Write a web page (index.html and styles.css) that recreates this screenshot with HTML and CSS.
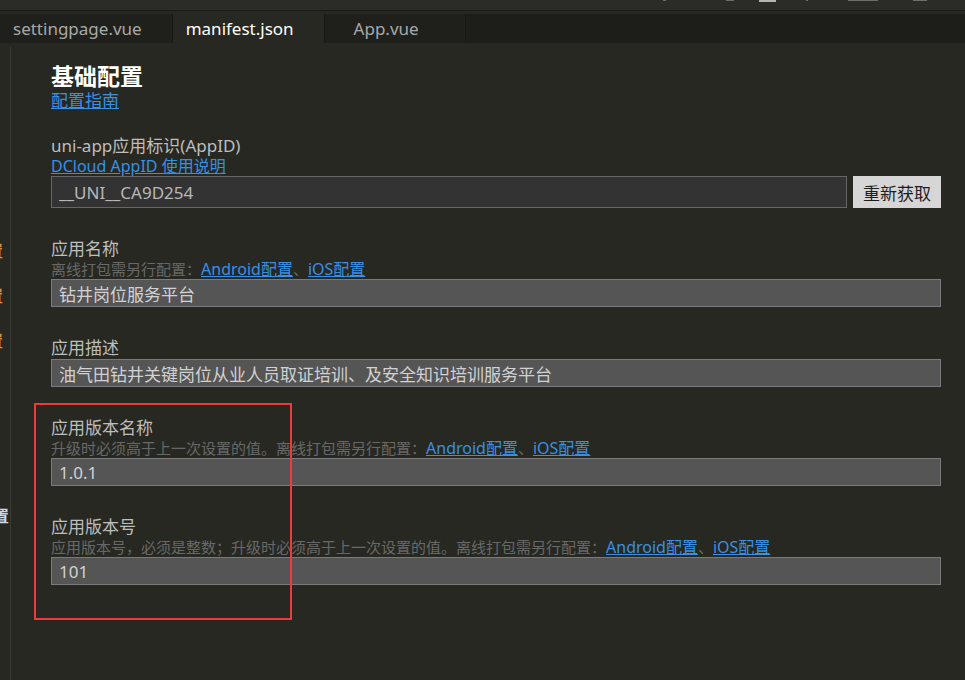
FILE: index.html
```html
<!DOCTYPE html>
<html lang="zh-CN">
<head>
    <meta charset="UTF-8">
    <meta name="viewport" content="width=device-width, initial-scale=1.0">
    <title>manifest.json</title>
    <link rel="stylesheet" href="styles.css">
</head>
<body>
    <div class="toolbar">
        <span class="tool-mark" style="width: 3px; margin-left: 663px;"></span>
        <span class="tool-mark" style="width: 8px; margin-left: 60px;"></span>
        <span class="tool-mark light" style="width: 17px; margin-left: 25px;"></span>
        <span class="tool-mark" style="width: 2px; margin-left: 30px;"></span>
        <span class="tool-mark" style="width: 30px; margin-left: 40px;"></span>
        <span class="tool-mark" style="width: 14px; margin-left: 35px;"></span>
    </div>

    <ul class="tabs">
        <li class="tab">settingpage.vue</li>
        <li class="tab active">manifest.json</li>
        <li class="tab">App.vue</li>
    </ul>

    <div class="main">
        <div class="side">
            <div class="side-item orange top1"><span>置</span></div>
            <div class="side-item orange"><span>置</span></div>
            <div class="side-item orange"><span>置</span></div>
            <div class="side-item white"><span>置</span></div>
        </div>

        <div class="content">
            <h1 class="titulo">基础配置</h1>
            <a class="guia grande" href="#">配置指南</a>

            <div class="campo primeiro">
                <div class="rotulo">uni-app应用标识(AppID)</div>
                <a class="guia" href="#">DCloud AppID 使用说明</a>
                <div class="linha">
                    <input class="valor escuro" type="text" value="__UNI__CA9D254" readonly>
                    <button class="botao">重新获取</button>
                </div>
            </div>

            <div class="campo">
                <div class="rotulo">应用名称</div>
                <div class="dica">离线打包需另行配置：<a href="#">Android配置</a>、<a href="#">iOS配置</a></div>
                <input class="valor" type="text" value="钻井岗位服务平台">
            </div>

            <div class="campo">
                <div class="rotulo">应用描述</div>
                <input class="valor" type="text" value="油气田钻井关键岗位从业人员取证培训、及安全知识培训服务平台">
            </div>

            <div class="campo">
                <div class="rotulo">应用版本名称</div>
                <div class="dica">升级时必须高于上一次设置的值。离线打包需另行配置：<a href="#">Android配置</a>、<a href="#">iOS配置</a></div>
                <input class="valor" type="text" value="1.0.1">
            </div>

            <div class="campo">
                <div class="rotulo">应用版本号</div>
                <div class="dica">应用版本号，必须是整数；升级时必须高于上一次设置的值。离线打包需另行配置：<a href="#">Android配置</a>、<a href="#">iOS配置</a></div>
                <input class="valor" type="text" value="101">
            </div>

            <div class="destaque"></div>
        </div>
    </div>
</body>
</html>
```

FILE: styles.css
```css
body {
    margin: 0;
    height: 680px;
    overflow: hidden;
    background-color: #272822;
    font-family: "Noto Sans", "Noto Sans CJK SC", sans-serif;
    display: flex;
    flex-direction: column;
}

/* barra de ferramentas cortada no topo */
.toolbar {
    height: 10px;
    background-color: #2b2c27;
    border-bottom: 1px solid #1a1b17;
    display: flex;
    align-items: flex-start;
    margin-bottom: 3px;
}

.tool-mark {
    height: 1px;
    background-color: #6f6f68;
}

.tool-mark.light {
    height: 2px;
    background-color: #b5b5b0;
}

.tabs {
    list-style: none;
    margin: 0;
    padding: 0;
    height: 29px;
    display: flex;
    background-color: #1d1e1a;
}

.tab {
    min-width: 97px;
    padding: 0 30px 0 13px;
    text-align: center;
    font-size: 17px;
    line-height: 29px;
    color: #a9a9a9;
    background-color: #1f201c;
    border-right: 1px solid #171814;
}

.tab.active {
    color: #ffffff;
    background-color: #272822;
}

.main {
    flex: 1;
    display: flex;
    margin-top: 4px;
}

/* painel lateral quase todo escondido */
.side {
    width: 10px;
    overflow: hidden;
    border-right: 1px solid #3a3b35;
    display: flex;
    flex-direction: column;
}

.side-item {
    display: flex;
    justify-content: flex-start;
    font-size: 16px;
    line-height: 20px;
    height: 45px;
}

.side-item span {
    flex-shrink: 0;
}

.side-item.top1 {
    margin-top: 194px;
}

.side-item.orange span {
    color: #d0913e;
    font-weight: bold;
    margin-left: -13px;
}

.side-item.white {
    margin-top: 130px;
    font-weight: bold;
}

.side-item.white span {
    color: #c8d6e6;
    margin-left: -7px;
}

.content {
    position: relative;
    flex: 1;
    padding: 15px 24px 0 40px;
}

.titulo {
    margin: 0 0 2px;
    font-size: 23px;
    line-height: 28px;
    font-weight: bold;
    color: #ffffff;
}

.guia {
    display: block;
    width: max-content;
    font-size: 16px;
    line-height: 18px;
    color: #3890e6;
}

.guia.grande {
    font-size: 17px;
}

.campo {
    margin-top: 30px;
}

.campo.primeiro {
    margin-top: 25px;
}

.rotulo {
    font-size: 17px;
    line-height: 22px;
    color: #bebebe;
}

.dica {
    font-size: 15px;
    line-height: 18px;
    color: #686868;
    margin-bottom: 1px;
}

.dica a {
    font-size: 16px;
    color: #3890e6;
}

.linha {
    display: flex;
    gap: 6px;
    margin-top: 1px;
}

.valor {
    display: block;
    box-sizing: border-box;
    width: 100%;
    height: 28px;
    margin: 0;
    padding: 0 7px;
    font-family: inherit;
    font-size: 17px;
    color: #d2d2d2;
    background-color: #555555;
    border: 1px solid #7a7a7a;
    outline: none;
}

.valor.escuro {
    flex: 1;
    height: 32px;
    color: #b8b8b8;
    background-color: #333333;
    border-color: #676767;
}

.botao {
    width: 88px;
    height: 32px;
    flex-shrink: 0;
    padding: 0;
    border: none;
    font-family: inherit;
    font-size: 17px;
    color: #1e1e1e;
    background-color: #d6d6d6;
}

/* moldura vermelha por cima dos campos de versão */
.destaque {
    position: absolute;
    left: 23px;
    top: 356px;
    width: 254px;
    height: 213px;
    border: 2px solid #ee3a3a;
}
```
